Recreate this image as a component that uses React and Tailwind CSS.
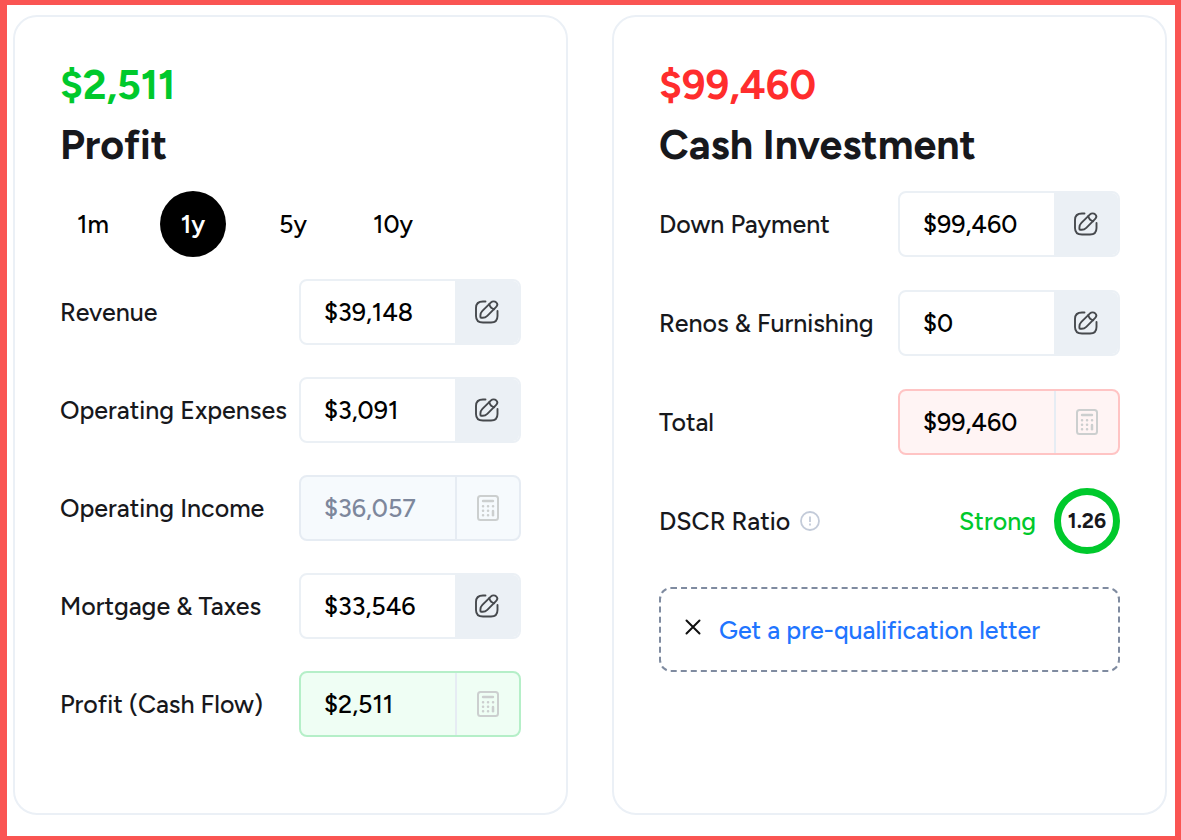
import React, { useState } from "react";

const periods = ["1m", "1y", "5y", "10y"];

const profitFields = [
  { id: "revenue", label: "Revenue", value: "$39,148", type: "edit" },
  { id: "expenses", label: "Operating Expenses", value: "$3,091", type: "edit" },
  { id: "income", label: "Operating Income", value: "$36,057", type: "muted" },
  { id: "mortgage", label: "Mortgage & Taxes", value: "$33,546", type: "edit" },
  { id: "profit", label: "Profit (Cash Flow)", value: "$2,511", type: "green" },
];

const cashFields = [
  { id: "down", label: "Down Payment", value: "$99,460", type: "edit" },
  { id: "renos", label: "Renos & Furnishing", value: "$0", type: "edit" },
  { id: "total", label: "Total", value: "$99,460", type: "red" },
];

const boxStyles = {
  edit: "border-[#ebf0f5] bg-white text-black",
  muted: "border-[#e6ecf3] bg-[#f6fafd] text-[#7d879c]",
  green: "border-[#b5efc8] bg-[#effef4] text-black",
  red: "border-[#ffc4c4] bg-[#fff4f4] text-black",
};

function EditIcon() {
  return (
    <svg className="size-6" viewBox="0 0 24 24" fill="none" stroke="#46494d" strokeWidth="1.9" strokeLinecap="round" strokeLinejoin="round">
      <path d="M10.500 1.500H8C3.500 1.500 1 3.700 1 8v8c0 4.500 2.500 6.500 7 6.500h8c4.500 0 6.500-2 6.500-6.500v-5" />
      <path d="M16 2.300 7.400 10.900c-1.300 1.300-2 2.900-2 4.600v1.600c0 .4.300.7.700.7h1.600c1.700 0 3.300-.7 4.600-2l8.900-8.900c1.300-1.300 1.300-3.300 0-4.600s-3.900-1.300-5.200 0z" />
      <path d="M14.300 4.200c.5 2.800 2.200 4.500 5 5" />
    </svg>
  );
}

function CalcIcon() {
  return (
    <svg className="h-[26px] w-[22px]" viewBox="0 0 22 26" fill="none" stroke="#cccfcf" strokeWidth="2" strokeLinecap="round">
      <rect x="1" y="1" width="20" height="24" rx="2.500" />
      <path d="M6 6h10" strokeWidth="2.400" />
      <path d="M6 11.200h.1M11 11.200h.1M16 11.200h.1M6 15.700h.1M11 15.700h.1M6 20.200h.1M11 20.200h.1" strokeWidth="2.500" />
      <path d="M16 15.900v4.300" strokeWidth="2.500" />
    </svg>
  );
}

function Field({ id, label, value, type }) {
  const [val, setVal] = useState(value);
  const editable = type === "edit";

  return (
    <div className="flex items-center justify-between">
      <label htmlFor={id} className="whitespace-nowrap">{label}</label>
      <div className={`flex h-[66px] w-[222px] shrink-0 overflow-hidden rounded-lg border-2 ${boxStyles[type]}`}>
        <input
          id={id}
          type="text"
          className="min-w-0 flex-1 bg-transparent pl-[23px] outline-none"
          value={val}
          readOnly={!editable}
          onChange={(e) => setVal(e.target.value)}
        />
        {editable ? (
          <button type="button" aria-label={"Edit " + label} className="flex w-16 items-center justify-center bg-[#ebf0f5]">
            <EditIcon />
          </button>
        ) : (
          <div className="flex w-16 items-center justify-center border-l-2 border-[#e6ecf3]">
            <CalcIcon />
          </div>
        )}
      </div>
    </div>
  );
}

function Card({ amount, amountColor, title, children }) {
  return (
    <section className="min-w-0 flex-1 rounded-3xl border-2 border-[#ebf0f6] px-[45px] pt-[38px] pb-[76px]">
      <h2 className="text-[41px] leading-[60px] font-bold">
        <span className={`block ${amountColor}`}>{amount}</span>
        {title}
      </h2>
      {children}
    </section>
  );
}

export default function App() {
  const [period, setPeriod] = useState("1y");

  return (
    <main className="flex min-h-screen gap-11 border-t-[5px] border-r-[6px] border-b-4 border-l-[7px] border-[#fa5553] bg-white pt-[10px] pr-2 pb-[21px] pl-[6px] font-['Figtree','Inter',sans-serif] text-[25px] leading-9 font-medium text-[#17181c]">
      <Card amount="$2,511" amountColor="text-[#00c92c]" title="Profit">
        <div className="mt-4 mb-[22px] flex gap-[34px] text-black">
          {periods.map((p) => (
            <button
              key={p}
              type="button"
              aria-pressed={p === period}
              onClick={() => setPeriod(p)}
              className={`size-[66px] rounded-full ${p === period ? "bg-black font-semibold text-white" : ""}`}
            >
              {p}
            </button>
          ))}
        </div>
        <div className="flex flex-col gap-8">
          {profitFields.map((f) => <Field key={f.id} {...f} />)}
        </div>
      </Card>

      <Card amount="$99,460" amountColor="text-[#ff2d2d]" title="Cash Investment">
        <div className="mt-4 flex flex-col gap-[33px]">
          {cashFields.map((f) => <Field key={f.id} {...f} />)}

          <div className="flex items-center">
            <span>DSCR Ratio</span>
            <button type="button" aria-label="About DSCR ratio" className="ml-[10px]">
              <svg className="size-5" viewBox="0 0 20 20" fill="none" stroke="#c3cbd9" strokeWidth="1.800">
                <circle cx="10" cy="10" r="9" />
                <path d="M10 5.500v5.500M10 12.600v2" />
              </svg>
            </button>
            <span className="ml-auto text-[#00c92c]">Strong</span>
            <span className="ml-[18px] flex size-[66px] items-center justify-center rounded-full border-[7px] border-[#00c92c] text-[21px] font-bold">
              1.26
            </span>
          </div>

          <div className="flex h-[85px] items-center rounded-xl border-2 border-dashed border-[#7f8ba0] pl-6">
            <button type="button" aria-label="Dismiss" className="mr-[18px] mb-1.5">
              <svg className="size-4" viewBox="0 0 16 16" fill="none" stroke="#111" strokeWidth="2" strokeLinecap="round">
                <path d="M1.500 1.500l13 13M14.500 1.500l-13 13" />
              </svg>
            </button>
            <a href="#" className="text-[#1f75ff]">Get a pre-qualification letter</a>
          </div>
        </div>
      </Card>
    </main>
  );
}
